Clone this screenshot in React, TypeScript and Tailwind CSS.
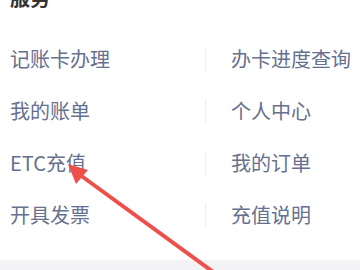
import React from 'react';

const items: [string, string][] = [
    ['记账卡办理', '办卡进度查询'],
    ['我的账单', '个人中心'],
    ['ETC充值', '我的订单'],
    ['开具发票', '充值说明'],
];

export default function App() {
    return (
        <div className="relative w-[360px] h-[270px] overflow-hidden bg-white font-['Noto_Sans_CJK_SC','Noto_Sans',sans-serif]">
            <div className="flex flex-col h-[33px]">
                <h2 className="mt-[-14px] pl-[10px] text-[20px] leading-[24px] font-bold text-[#333333]">服务</h2>
            </div>

            {/* service grid */}
            <div className="flex flex-col">
                {items.map(([left, right]) => (
                    <div key={left} className="flex items-center h-[52px]">
                        <div className="w-[205px] pl-[10px] text-[20px] leading-[28px] text-[#66708f]">{left}</div>
                        <div className="w-px h-[24px] bg-[#eeeff2]" />
                        <div className="pl-[25px] text-[20px] leading-[28px] text-[#66708f]">{right}</div>
                    </div>
                ))}
            </div>

            <div className="mt-[19px] h-[20px] bg-[#f3f3f5]" />

            {/* annotation arrow */}
            <svg className="absolute left-0 top-0 pointer-events-none" width="360" height="270" viewBox="0 0 360 270">
                <line x1="76" y1="172" x2="216" y2="274" stroke="#ee4f4a" strokeWidth="4" strokeLinecap="round" />
                <polygon points="68,164 88,170 76,184" fill="#ee4f4a" />
            </svg>
        </div>
    );
}
